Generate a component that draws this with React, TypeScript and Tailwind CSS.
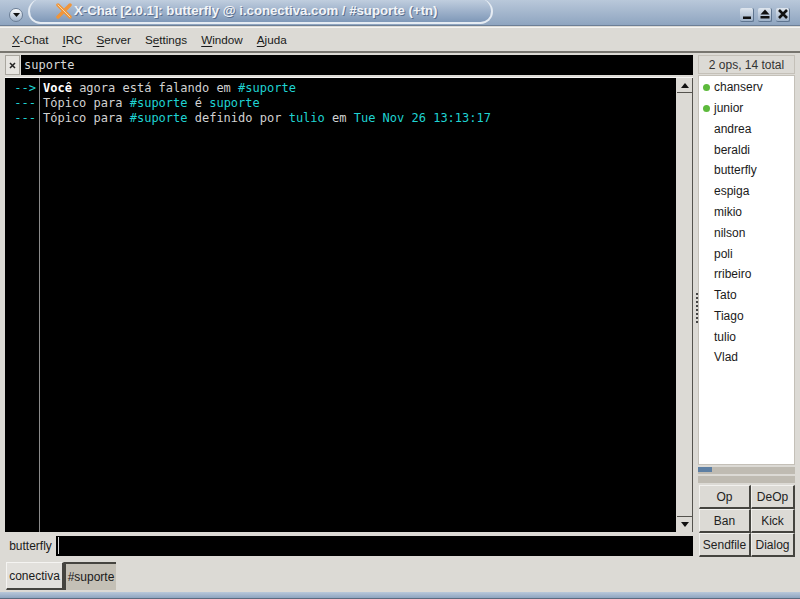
const mono = 'font-["DejaVu_Sans_Mono",monospace]';

const nicks = ['chanserv', 'junior', 'andrea', 'beraldi', 'butterfly', 'espiga', 'mikio', 'nilson', 'poli', 'rribeiro', 'Tato', 'Tiago', 'tulio', 'Vlad'];

function Mnemonic({ before = '', letter, after }: { before?: string; letter: string; after: string }) {
  return (
    <span>
      {before}
      <span className="underline underline-offset-2">{letter}</span>
      {after}
    </span>
  );
}

function WinButton({ children }: { children: React.ReactNode }) {
  return (
    <div className="w-[14px] h-[14px] rounded-[2px] bg-gradient-to-b from-[#dfe6ee] to-[#9fb2c9] border-b border-r border-[#5f7590] flex items-center justify-center">
      <svg width="12" height="12" viewBox="0 0 12 12">{children}</svg>
    </div>
  );
}

function ActionButton({ label, wide }: { label: string; wide?: boolean }) {
  return (
    <button className={`${wide ? 'w-[52px]' : 'w-[44px]'} h-[24px] bg-[#dcdad5] border-b-2 border-r-2 border-[#45443f] border-t border-l border-t-[#f2f1ee] border-l-[#f2f1ee] text-[12px] text-[#222] flex items-center justify-center`}>
      {label}
    </button>
  );
}

export default function App() {
  return (
    <div className='w-[800px] h-[599px] overflow-hidden flex flex-col bg-[#dcdad5] font-["Liberation_Sans",sans-serif] text-[12px] text-[#1a1a1a]'>
      {/* Title bar */}
      <div className="h-[26px] flex items-center bg-gradient-to-b from-[#b9c8da] to-[#8fa5c0] border-b border-[#6d7f96] shrink-0">
        <div className="ml-[9px] mt-[4px] w-[14px] h-[14px] rounded-full bg-gradient-to-b from-[#ffffff] to-[#9fb2c9] border border-[#6d7f96] flex items-center justify-center">
          <svg width="9" height="6" viewBox="0 0 9 6">
            <path d="M1 1h7L4.500 5z" fill="#111" />
          </svg>
        </div>
        <div className="ml-[5px] w-[465px] h-[25px] -mt-[2px] rounded-[14px] bg-gradient-to-b from-[#c3d0e0] to-[#7f98b8] border-2 border-t-0 border-[#e6ecf3] flex items-center pl-[26px]">
          <svg width="16" height="16" viewBox="0 0 16 16" className="shrink-0">
            <path d="M2 2l12 12M14 2L2 14" stroke="#f0953a" strokeWidth="3.500" strokeLinecap="round" />
            <path d="M2 2l12 12" stroke="#f6d9a8" strokeWidth="1" strokeLinecap="round" />
          </svg>
          <span className="ml-[2px] text-[13.200px] font-bold text-[#f3f5f8] whitespace-nowrap [text-shadow:1px_1px_0_#5c7190]">
            X-Chat [2.0.1]: butterfly @ i.conectiva.com / #suporte (+tn)
          </span>
        </div>
        <div className="ml-auto mr-[10px] mt-[4px] flex gap-[4px]">
          <WinButton>
            <rect x="2" y="8.500" width="8" height="2.500" fill="#111" />
          </WinButton>
          <WinButton>
            <path d="M6 1.500l4.500 5h-9z" fill="#111" />
            <rect x="1.500" y="8" width="9" height="2.500" fill="#111" />
          </WinButton>
          <WinButton>
            <path d="M2 2l8 8M10 2l-8 8" stroke="#111" strokeWidth="2.600" />
          </WinButton>
        </div>
      </div>

      {/* Menu bar */}
      <div className="h-[26px] mt-px flex items-center gap-[14px] pl-[12px] text-[11.700px] bg-[#dcdad5] border-t border-[#f5f4f2] border-b-2 border-b-[#77756f] shrink-0">
        <Mnemonic letter="X" after="-Chat" />
        <Mnemonic letter="I" after="RC" />
        <Mnemonic letter="S" after="erver" />
        <Mnemonic before="S" letter="e" after="ttings" />
        <Mnemonic letter="W" after="indow" />
        <Mnemonic letter="A" after="juda" />
      </div>

      {/* Main area */}
      <div className="flex-1 min-h-0 flex pl-[5px] pr-[5px] pt-[2px]">
        <div className="w-[688px] flex flex-col shrink-0">
          <div className="h-[21px] flex">
            <button className="w-[15px] h-[20px] border border-[#a9a69f] bg-[#e6e4e0] flex items-center justify-center">
              <svg width="7" height="7" viewBox="0 0 7 7">
                <path d="M1 1l5 5M6 1L1 6" stroke="#222" strokeWidth="1.500" />
              </svg>
            </button>
            <div className={`ml-px flex-1 h-[20px] bg-black text-[#d8d8d8] pl-[3px] text-[12px] leading-[20px] ${mono}`}>suporte</div>
          </div>
          <div className="mt-px h-[455px] flex border-t border-[#f5f4f2]">
            <div className={`flex-1 bg-black flex text-[12px] leading-[15px] pt-[3px] ${mono}`}>
              <div className="w-[35px] shrink-0 border-r border-[#8a8a8a] -mt-[3px] pt-[3px] text-right pr-[3px] text-[#1fd3d3]">
                <div>--&gt;</div>
                <div>---</div>
                <div>---</div>
              </div>
              <div className="pl-[3px] text-[#d2d2d2] whitespace-pre">
                <div>
                  <span className="font-bold text-white">Você</span> agora está falando em <span className="text-[#1fd3d3]">#suporte</span>
                </div>
                <div>
                  Tópico para <span className="text-[#1fd3d3]">#suporte</span> é <span className="text-[#1fd3d3]">suporte</span>
                </div>
                <div>
                  Tópico para <span className="text-[#1fd3d3]">#suporte</span> definido por <span className="text-[#1fd3d3]">tulio</span> em <span className="text-[#1fd3d3]">Tue Nov 26 13:13:17</span>
                </div>
              </div>
            </div>
            <div className="w-[16px] ml-px bg-[#c4c0b8] border-r border-[#55534e] flex flex-col justify-between">
              <div className="h-[15px] bg-[#dcdad5] border-b border-[#55534e] flex items-center justify-center">
                <svg width="8" height="5" viewBox="0 0 8 5"><path d="M4 0l4 5H0z" fill="#111" /></svg>
              </div>
              <div className="flex-1 bg-[#dcdad5] border-b border-[#55534e]" />
              <div className="h-[15px] bg-[#dcdad5] flex items-center justify-center">
                <svg width="8" height="5" viewBox="0 0 8 5"><path d="M0 0h8L4 5z" fill="#111" /></svg>
              </div>
            </div>
          </div>
          <div className="mt-[3px] h-[21px] flex items-center">
            <div className="w-[51px] text-center text-[12px]">butterfly</div>
            <div className="flex-1 h-[20px] bg-black pl-[2px] pt-px">
              <div className="w-px h-[17px] bg-[#d8d8d8]" />
            </div>
          </div>
        </div>

        {/* Paned handle */}
        <div className="w-[5px] shrink-0 flex items-center">
          <div className="ml-[3px] w-[2px] h-[30px] border-l-2 border-dotted border-[#444]" />
        </div>

        <div className="flex-1 min-w-0 flex flex-col">
          <div className="h-[19px] bg-[#dcdad5] border border-[#c4c0b8] flex items-center justify-center text-[12px] text-[#333]">2 ops, 14 total</div>
          <div className="h-[390px] mt-px pt-px bg-white border border-[#c4c0b8]">
            {nicks.map((nick, i) => (
              <div key={nick} className="h-[20.770px] flex items-center">
                {i < 2 && <span className="ml-[4px] w-[7px] h-[7px] rounded-full bg-[#5dba3c]" />}
                <span className={i < 2 ? 'ml-[4px]' : 'ml-[15px]'}>{nick}</span>
              </div>
            ))}
          </div>
          <div className="mt-[2px] h-[7px] bg-[#bfbbb2]">
            <div className="w-[14px] h-[5px] bg-[#5d7fa3]" />
          </div>
          <div className="mt-[2px] h-[7px] bg-[#bfbbb2]" />
          <div className="mt-[2px] ml-px flex flex-wrap">
            <ActionButton label="Op" wide />
            <ActionButton label="DeOp" />
            <ActionButton label="Ban" wide />
            <ActionButton label="Kick" />
            <ActionButton label="Sendfile" wide />
            <ActionButton label="Dialog" />
          </div>
        </div>
      </div>

      {/* Tabs */}
      <div className="h-[31px] shrink-0 flex items-start pl-[6px] pt-[1px]">
        <div className="w-[58px] h-[28px] bg-[#e2e0dc] border-t border-l border-[#f5f4f2] border-b-2 border-r-2 border-b-[#45443f] border-r-[#45443f] flex items-center justify-center">conectiva</div>
        <div className="w-[52px] h-[28px] bg-[#c4c0b6] border-t-2 border-l-2 border-[#45443f] flex items-center justify-center">#suporte</div>
      </div>

      {/* Bottom frame */}
      <div className="h-[6px] shrink-0 bg-gradient-to-b from-[#b9c8da] to-[#8fa5c0]" />
      <div className="h-[1px] shrink-0 bg-[#5c6c80]" />
    </div>
  );
}
